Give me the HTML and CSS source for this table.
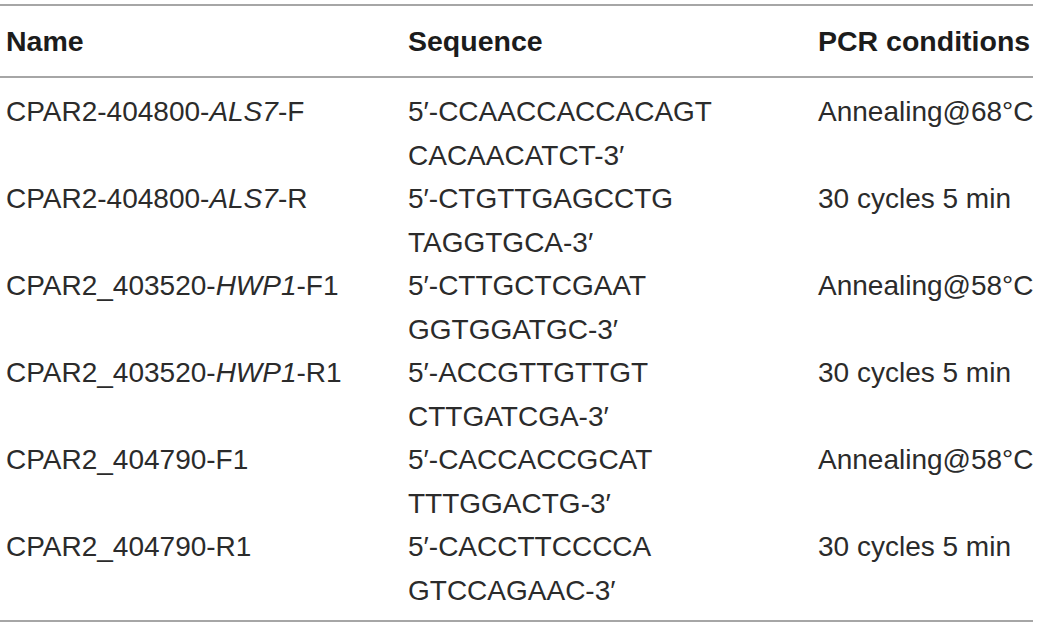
FILE: index.html
```html
<!DOCTYPE html>
<html>
<head>
<meta charset="utf-8">
<link rel="stylesheet" href="styles.css">
</head>
<body>
<table class="primers">
  <colgroup>
    <col class="c-name">
    <col class="c-seq">
    <col class="c-pcr">
  </colgroup>
  <thead>
    <tr>
      <th>Name</th>
      <th>Sequence</th>
      <th>PCR conditions</th>
    </tr>
  </thead>
  <tbody>
    <tr class="first">
      <td>CPAR2-404800-<i>ALS7</i>-F</td>
      <td>5′-CCAACCACCACAGT<br>CACAACATCT-3′</td>
      <td>Annealing@68°C</td>
    </tr>
    <tr>
      <td>CPAR2-404800-<i>ALS7</i>-R</td>
      <td>5′-CTGTTGAGCCTG<br>TAGGTGCA-3′</td>
      <td>30 cycles 5 min</td>
    </tr>
    <tr>
      <td>CPAR2_403520-<i>HWP1</i>-F1</td>
      <td>5′-CTTGCTCGAAT<br>GGTGGATGC-3′</td>
      <td>Annealing@58°C</td>
    </tr>
    <tr>
      <td>CPAR2_403520-<i>HWP1</i>-R1</td>
      <td>5′-ACCGTTGTTGT<br>CTTGATCGA-3′</td>
      <td>30 cycles 5 min</td>
    </tr>
    <tr>
      <td>CPAR2_404790-F1</td>
      <td>5′-CACCACCGCAT<br>TTTGGACTG-3′</td>
      <td>Annealing@58°C</td>
    </tr>
    <tr class="last">
      <td>CPAR2_404790-R1</td>
      <td>5′-CACCTTCCCCA<br>GTCCAGAAC-3′</td>
      <td>30 cycles 5 min</td>
    </tr>
  </tbody>
</table>
</body>
</html>
```
FILE: styles.css
```css
html, body {
  margin: 0;
  padding: 0;
  background: #ffffff;
}

body {
  padding-top: 4px;
  font-family: "Liberation Sans", Arial, sans-serif;
  color: #2b2b2b;
}

.primers {
  width: 1033px;
  border-collapse: collapse;
  border-top: 2px solid #a6a6a6;
  border-bottom: 2px solid #a6a6a6;
  table-layout: fixed;
}

.c-name { width: 402px; }
.c-seq { width: 410px; }
.c-pcr { width: auto; }

.primers th {
  font-size: 28.5px;
  font-weight: bold;
  color: #1c1c1c;
  text-align: left;
  height: 70px;
  padding: 0 0 0 6px;
  vertical-align: middle;
  border-bottom: 2px solid #a6a6a6;
  white-space: nowrap;
}

.primers td {
  font-size: 28px;
  line-height: 43.5px;
  text-align: left;
  vertical-align: top;
  padding: 0 0 0 6px;
  white-space: nowrap;
}

.primers tr.first td {
  padding-top: 12px;
}

.primers tr.last td {
  padding-bottom: 8px;
}

.primers i {
  font-style: italic;
}
```
